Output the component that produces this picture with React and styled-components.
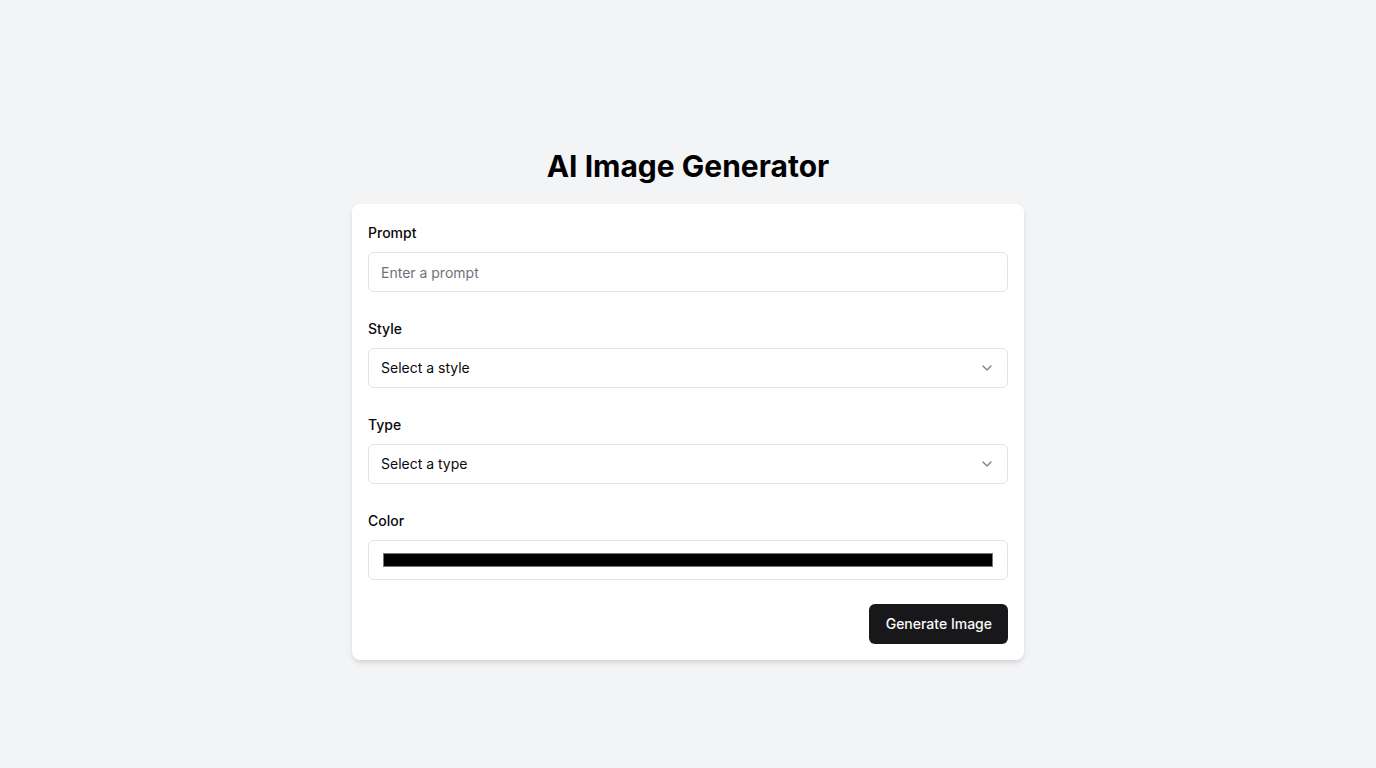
import React, { useState } from "react";
import styled, { createGlobalStyle } from "styled-components";
import { ChevronDown } from "lucide-react";

const GlobalStyle = createGlobalStyle`
    * {
        box-sizing: border-box;
    }
    body {
        margin: 0;
        background: #f3f4f6;
        font-family: Inter, "Noto Sans", "Liberation Sans", sans-serif;
        color: #09090b;
    }
`;

const App = () => {
    const [form, setForm] = useState({ prompt: "", color: "#000000" });

    const handleChange = (e) => {
        const { name, value } = e.target;
        setForm({ ...form, [name]: value });
    };

    return (
        <Page>
            <GlobalStyle />
            <Title>AI Image Generator</Title>
            <Card onSubmit={(e) => e.preventDefault()}>
                <Field>
                    <Label>Prompt</Label>
                    <Input
                        type="text"
                        name="prompt"
                        placeholder="Enter a prompt"
                        value={form.prompt}
                        onChange={handleChange}
                    />
                </Field>
                <Field>
                    <Label>Style</Label>
                    <SelectBox type="button">
                        Select a style
                        <ChevronDown size={16} />
                    </SelectBox>
                </Field>
                <Field>
                    <Label>Type</Label>
                    <SelectBox type="button">
                        Select a type
                        <ChevronDown size={16} />
                    </SelectBox>
                </Field>
                <Field>
                    <Label>Color</Label>
                    <ColorInput
                        type="color"
                        name="color"
                        value={form.color}
                        onChange={handleChange}
                    />
                </Field>
                <Actions>
                    <Button type="submit">Generate Image</Button>
                </Actions>
            </Card>
        </Page>
    );
};

const Page = styled.div`
    min-height: 100vh;
    padding-top: 148px;
    display: flex;
    flex-direction: column;
    align-items: center;
`;

const Title = styled.h1`
    margin: 0 0 20px;
    font-size: 30px;
    line-height: 36px;
    font-weight: 700;
    color: #000;
`;

const Card = styled.form`
    width: 672px;
    padding: 16px;
    background: #fff;
    border-radius: 8px;
    box-shadow: 0 4px 6px -1px rgba(0, 0, 0, 0.1), 0 2px 4px -2px rgba(0, 0, 0, 0.1);
    display: flex;
    flex-direction: column;
    gap: 24px;
`;

const Field = styled.div`
    display: flex;
    flex-direction: column;
    gap: 7px;
`;

const Label = styled.label`
    font-size: 14px;
    line-height: 25px;
    font-weight: 500;
`;

const Input = styled.input`
    height: 40px;
    width: 100%;
    padding: 8px 12px;
    border: 1px solid #e4e4e7;
    border-radius: 6px;
    font-family: inherit;
    font-size: 14px;
    color: #09090b;
    outline: none;
    &::placeholder {
        color: #71717a;
    }
`;

const SelectBox = styled.button`
    height: 40px;
    width: 100%;
    padding: 7px 12px 9px;
    border: 1px solid #e4e4e7;
    border-radius: 6px;
    background: #fff;
    font-family: inherit;
    font-size: 14px;
    color: #09090b;
    display: flex;
    align-items: center;
    justify-content: space-between;
    svg {
        opacity: 0.5;
        margin-top: 1px;
    }
`;

const ColorInput = styled.input`
    height: 40px;
    width: 100%;
    padding: 8px 12px;
    border: 1px solid #e4e4e7;
    border-radius: 6px;
    background: #fff;
    cursor: pointer;
    &::-webkit-color-swatch-wrapper {
        padding: 4px 2px;
    }
    &::-webkit-color-swatch {
        border: 1px solid #777;
        border-radius: 0;
    }
`;

const Actions = styled.div`
    display: flex;
    justify-content: flex-end;
`;

const Button = styled.button`
    height: 40px;
    padding: 7px 16px 9px 17px;
    border: none;
    border-radius: 6px;
    background: #18181b;
    color: #fafafa;
    font-family: inherit;
    font-size: 14px;
    font-weight: 500;
    cursor: pointer;
`;

export default App;
